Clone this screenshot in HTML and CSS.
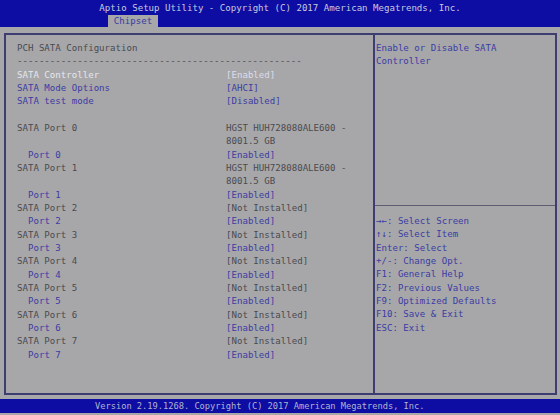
FILE: index.html
```html
<!DOCTYPE html>
<html>
<head>
<meta charset="utf-8">
<link rel="stylesheet" href="styles.css">
</head>
<body>
<div class="screen">
  <div class="header">
    <div class="title">Aptio Setup Utility - Copyright (C) 2017 American Megatrends, Inc.</div>
    <div class="tabs"><span class="tab">Chipset</span></div>
  </div>
  <div class="main">
    <div class="box">
      <div class="left">
        <div class="row"><span class="lbl">PCH SATA Configuration</span></div>
        <div class="row"><span class="lbl">----------------------------------------------------</span></div>
        <div class="row sel"><span class="lbl">SATA Controller</span><span class="val">[Enabled]</span></div>
        <div class="row opt"><span class="lbl">SATA Mode Options</span><span class="val">[AHCI]</span></div>
        <div class="row opt"><span class="lbl">SATA test mode</span><span class="val">[Disabled]</span></div>
        <div class="row"></div>
        <div class="row"><span class="lbl">SATA Port 0</span><span class="val">HGST HUH728080ALE600 -</span></div>
        <div class="row"><span class="lbl"></span><span class="val">8001.5 GB</span></div>
        <div class="row opt"><span class="lbl ind">Port 0</span><span class="val">[Enabled]</span></div>
        <div class="row"><span class="lbl">SATA Port 1</span><span class="val">HGST HUH728080ALE600 -</span></div>
        <div class="row"><span class="lbl"></span><span class="val">8001.5 GB</span></div>
        <div class="row opt"><span class="lbl ind">Port 1</span><span class="val">[Enabled]</span></div>
        <div class="row"><span class="lbl">SATA Port 2</span><span class="val">[Not Installed]</span></div>
        <div class="row opt"><span class="lbl ind">Port 2</span><span class="val">[Enabled]</span></div>
        <div class="row"><span class="lbl">SATA Port 3</span><span class="val">[Not Installed]</span></div>
        <div class="row opt"><span class="lbl ind">Port 3</span><span class="val">[Enabled]</span></div>
        <div class="row"><span class="lbl">SATA Port 4</span><span class="val">[Not Installed]</span></div>
        <div class="row opt"><span class="lbl ind">Port 4</span><span class="val">[Enabled]</span></div>
        <div class="row"><span class="lbl">SATA Port 5</span><span class="val">[Not Installed]</span></div>
        <div class="row opt"><span class="lbl ind">Port 5</span><span class="val">[Enabled]</span></div>
        <div class="row"><span class="lbl">SATA Port 6</span><span class="val">[Not Installed]</span></div>
        <div class="row opt"><span class="lbl ind">Port 6</span><span class="val">[Enabled]</span></div>
        <div class="row"><span class="lbl">SATA Port 7</span><span class="val">[Not Installed]</span></div>
        <div class="row opt"><span class="lbl ind">Port 7</span><span class="val">[Enabled]</span></div>
      </div>
      <div class="right">
        <div class="desc">
          <div class="row">Enable or Disable SATA</div>
          <div class="row">Controller</div>
        </div>
        <div class="keys">
          <div class="row">→←: Select Screen</div>
          <div class="row">↑↓: Select Item</div>
          <div class="row">Enter: Select</div>
          <div class="row">+/-: Change Opt.</div>
          <div class="row">F1: General Help</div>
          <div class="row">F2: Previous Values</div>
          <div class="row">F9: Optimized Defaults</div>
          <div class="row">F10: Save &amp; Exit</div>
          <div class="row">ESC: Exit</div>
        </div>
      </div>
    </div>
  </div>
  <div class="footer">Version 2.19.1268. Copyright (C) 2017 American Megatrends, Inc.</div>
</div>
</body>
</html>
```
FILE: styles.css
```css
html, body {
  margin: 0;
  padding: 0;
  background: #a7a7a9;
}
.screen {
  width: 560px;
  height: 415px;
  overflow: hidden;
  font-family: "DejaVu Sans Mono", "Liberation Mono", monospace;
  font-size: 9.1px;
  background: #a7a7a9;
  color: #4a4a50;
}
.header {
  height: 27px;
  background: #0d0da4;
  display: flex;
  flex-direction: column;
}
.title {
  height: 13px;
  line-height: 13px;
  padding-top: 2px;
  text-align: center;
  color: #c9c9de;
  white-space: pre;
}
.tabs {
  padding-left: 108px;
  display: flex;
}
.tab {
  display: block;
  width: 50px;
  height: 12px;
  line-height: 13px;
  background: #a7a7a9;
  color: #3a3aa2;
  text-align: center;
}
.main {
  padding: 6px 3px 4px 4px;
}
.box {
  height: 358px;
  border: 2px solid #3d3d72;
  display: flex;
}
.left {
  width: 356px;
  padding: 7px 0 0 11px;
  border-right: 2px solid #3d3d72;
}
.row {
  height: 13.33px;
  line-height: 13.33px;
  display: flex;
  white-space: pre;
}
.lbl {
  width: 209px;
  flex: none;
}
.ind {
  padding-left: 11px;
  width: 198px;
}
.opt {
  color: #3c3ca4;
}
.sel .lbl {
  color: #e6e6ec;
}
.sel .val {
  color: #dcdcec;
}
.right {
  flex: 1;
  display: flex;
  flex-direction: column;
  color: #3c3ca4;
}
.desc {
  height: 163px;
  padding: 7px 0 0 1px;
  border-bottom: 1px solid #5c5c72;
}
.keys {
  padding: 9px 0 0 1px;
}
.footer {
  height: 14px;
  line-height: 14px;
  background: #0d0da4;
  color: #b3b3cf;
  font-size: 8.7px;
  padding-left: 95px;
  white-space: pre;
}
```
